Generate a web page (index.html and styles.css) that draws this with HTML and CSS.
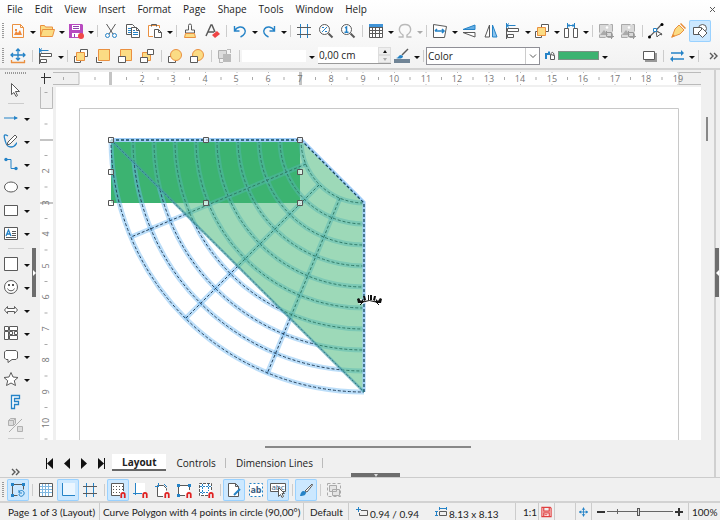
FILE: index.html
```html
<!DOCTYPE html>
<html lang="en">
<head>
<meta charset="utf-8">
<title>Drawing</title>
<link rel="stylesheet" href="styles.css">
</head>
<body>
<svg class="defs" aria-hidden="true">
  <symbol id="magnet" viewBox="0 0 5 6"><path d="M1 6V3a1.5 1.5 0 0 1 3 0V6" fill="none" stroke="#e02020" stroke-width="1.500"/></symbol>
  <symbol id="align" viewBox="0 0 16 16"><path class="b" d="M1.500 0v5M1.500 2.500h9M4 .5l-2.500 2 2.500 2"/><path class="k w" d="M2.500 5.500h11v3h-11zM2.500 11.500h6v3h-6z"/><path class="k" d="M1.500 5v11"/></symbol>
</svg>
<header class="top">
  <nav class="menu">
    <button>File</button><button>Edit</button><button>View</button><button>Insert</button><button>Format</button><button>Page</button><button>Shape</button><button>Tools</button><button>Window</button><button>Help</button>
    <button class="close" aria-label="Close document"><svg width="7" height="7" viewBox="0 0 7 7"><path class="k" d="M1 1l5 5M6 1L1 6"/></svg></button>
  </nav>
  <div class="bar">
    <span class="grip"></span>
    <button class="tool" aria-label="New"><svg viewBox="0 0 16 16"><path class="o" fill="#fff" d="M2.500 1.500h8l3 3v10h-11zM10.500 1.500v3h3"/><path d="M4 12l2-4 2 2 2-3 2 5zM5 6h2v2H5z" fill="#f08a3c"/></svg></button><button class="drop" aria-label="New options"></button>
    <button class="tool" aria-label="Open"><svg viewBox="0 0 16 16"><path class="o y" d="M1.500 13.500v-11h4l1 1.500h7v3M1.500 13.500l2-7h12l-2 7z"/></svg></button><button class="drop" aria-label="Recent files"></button>
    <button class="tool" aria-label="Save"><svg viewBox="0 0 16 16"><path fill="#b84bc0" d="M1 1h13l1 1v13H1z"/><path fill="#fff" d="M4 2h8v5H4zM4 10h8v4H4z"/><path stroke="#8e44ad" d="M5 3.500h6M5 5.500h6M6.500 11v3"/><circle cx="13" cy="13" r="3" fill="#f04848"/></svg></button><button class="drop" aria-label="Save options"></button>
    <i class="sep"></i>
    <button class="tool" aria-label="Cut"><svg viewBox="0 0 16 16"><path class="k" d="M3.500 1l6.500 10M12.500 1L6 11"/><circle class="b" cx="4.500" cy="12.500" r="2"/><circle class="b" cx="11.500" cy="12.500" r="2"/></svg></button>
    <button class="tool" aria-label="Copy"><svg viewBox="0 0 16 16"><path class="k w" d="M1.500 1.500h6l2 2v8h-8z"/><path class="b" d="M3 5.500h3M3 7.500h3M3 9.500h3"/><path class="k w" d="M6.500 4.500h5l3 3v7h-8zM11.500 4.500v3h3"/><path class="b" d="M8 9.500h5M8 11.500h5M8 7.500h2"/></svg></button>
    <button class="tool" aria-label="Paste"><svg viewBox="0 0 16 16"><path class="o w" d="M6 13.500H1.500v-11h11V5"/><path class="k" d="M4.500 3.500v-2h5v2"/><path class="k w" d="M7.500 6.500h4l3 3v5h-7zM11.500 6.500v3h3"/></svg></button><button class="drop" aria-label="Paste options"></button>
    <i class="sep"></i>
    <button class="tool" aria-label="Clone formatting"><svg viewBox="0 0 16 16"><path class="k" d="M6.500 7V2.500a1.500 1.500 0 0 1 3 0V7h3v3h-9V7z"/><path class="o y" d="M3.500 10.500h9l1 4h-11z"/></svg></button>
    <button class="tool" aria-label="Clear formatting"><svg viewBox="0 0 16 16"><path class="k" stroke-width="1.500" d="M2 13L7 2h1l3 7M4 9h6"/><path fill="#f04545" d="M8 12l5-4 3 3-5 4z"/></svg></button>
    <i class="sep"></i>
    <button class="tool" aria-label="Undo"><svg viewBox="0 0 16 16"><path class="b" stroke-width="1.400" d="M2.500 3v5h5M2.500 8c3-5 8-5 10-2s0 6-4 8"/></svg></button><button class="drop" aria-label="Undo history"></button>
    <button class="tool" aria-label="Redo"><svg viewBox="0 0 16 16"><path class="b" stroke-width="1.400" d="M13.500 3v5h-5M13.500 8c-3-5-8-5-10-2s0 6 4 8"/></svg></button><button class="drop" aria-label="Redo history"></button>
    <i class="sep"></i>
    <button class="tool" aria-label="Display grid"><svg viewBox="0 0 16 16"><path class="b" d="M4.500 1v14M11.500 1v14"/><path class="k" d="M1 4.500h14M1 11.500h14"/></svg></button>
    <button class="tool" aria-label="Zoom and pan"><svg viewBox="0 0 16 16"><circle class="k w" cx="6.500" cy="6.500" r="5"/><path class="k" stroke-width="2" d="M10.500 10.500l4 4"/><path class="b" d="M4 9l5-5M4 4.500h2M7 8.500h2"/></svg></button>
    <button class="tool" aria-label="Zoom 100%"><svg viewBox="0 0 16 16"><circle class="k w" cx="6.500" cy="6.500" r="5"/><path class="k" stroke-width="2" d="M10.500 10.500l4 4"/><path class="b" stroke-width="1.500" d="M5 5l1.500-1v5M4.500 9.200h4"/></svg></button>
    <i class="sep"></i>
    <button class="tool" aria-label="Table"><svg viewBox="0 0 16 16"><path class="k w" d="M1.500 1.500h13v13h-13z"/><path fill="#3f94d8" d="M1 1h14v3H1z"/><path class="k" d="M1 4.500h14M1 7.500h14M1 10.500h14M4.500 4v11M7.500 4v11M11.500 4v11"/></svg></button><button class="drop" aria-label="Table options"></button>
    <button class="tool" aria-label="Special character"><svg viewBox="0 0 16 16"><path fill="none" stroke="#b9b9b9" stroke-width="1.400" d="M1.500 14H6v-2C0 8 2 1.500 8 1.500S16 8 10 12v2h4.500"/></svg></button><button class="drop off" aria-label="Special character options"></button>
    <i class="sep"></i>
    <button class="tool" aria-label="Transformations"><svg viewBox="0 0 16 16"><path class="k w" d="M1.500 1.500l13 2-2 11h-11z"/><path class="b" stroke-width="1.600" d="M3 8h9M5 6L3 8M10 6l2 2-2 2"/></svg></button><button class="drop" aria-label="Transformation options"></button>
    <button class="tool" aria-label="Flip vertically"><svg viewBox="0 0 16 16"><path fill="#64aee4" stroke="#2583c7" d="M2 6.500L14 2v4.500z"/><path class="k w" d="M2 9.500h12V14z"/></svg></button>
    <button class="tool" aria-label="Flip horizontally"><svg viewBox="0 0 16 16"><path class="k w" d="M6.500 2v12H2z"/><path fill="#8bc4ee" stroke="#2583c7" d="M9.500 2v12H14z"/></svg></button>
    <button class="tool" aria-label="Align objects"><svg><use href="#align"/></svg></button><button class="drop" aria-label="Align options"></button>
    <button class="tool" aria-label="Arrange"><svg viewBox="0 0 16 16"><path class="k w" d="M7.500 1.500h7v7h-7zM1.500 8.500h6v6h-6z"/><path class="o y" d="M3.500 4.500h8v8h-8z"/></svg></button><button class="drop" aria-label="Arrange options"></button>
    <button class="tool" aria-label="Distribute"><svg viewBox="0 0 16 16"><path class="k w" d="M1.500 5.500h4v9h-4zM10.500 5.500h4v9h-4z"/><path class="b" d="M4.500 0v5M11.500 0v5M5 2.500h6M6.500 1L5 2.500 6.500 4M9.500 1L11 2.500 9.500 4"/></svg></button><button class="drop" aria-label="Distribute options"></button>
    <i class="sep"></i>
    <button class="tool" aria-label="Shadow"><svg viewBox="0 0 16 16"><path fill="#d9d9d9" stroke="#aaa" stroke-dasharray="9 2" d="M1.500 1.500h13v13h-13z"/><path fill="#aaa" d="M2 12l4-5 4 5z"/><circle cx="9" cy="4.500" r="1.300" fill="#fff"/><path fill="none" stroke="#999" d="M8.500 8v5.500H16M8 9.500h5.500V16"/></svg></button>
    <button class="tool" aria-label="Crop image"><svg viewBox="0 0 16 16"><path fill="#d9d9d9" stroke="#aaa" stroke-dasharray="9 2" d="M1.500 1.500h13v13h-13z"/><path fill="#aaa" d="M2 12l4-5 4 5z"/><circle cx="9" cy="4.500" r="1.300" fill="#fff"/><path fill="none" stroke="#999" d="M8.500 8v5.500H16M8 9.500h5.500V16"/></svg></button>
    <i class="sep"></i>
    <button class="tool" aria-label="Points"><svg viewBox="0 0 16 16"><path class="k" stroke-width="1.300" d="M1 14c4-3 8-8 13-13M6 6l8 6"/><path class="k w" d="M8 8l1 6 2-2 3-1z"/><path class="b w" d="M5.500 5.500h3v3h-3z"/><circle cx="14" cy="1.500" r="1.500"/><circle cx="1.500" cy="14" r="1.500"/></svg></button>
    <button class="tool" aria-label="Glue points"><svg viewBox="0 0 16 16"><path class="o y" d="M2 14l3-8 4-4 5 5-4 4z"/><path fill="#e88a32" d="M10 1l1-1 5 5-1 1zM1 15l2-4 2 2z"/></svg></button>
    <button class="tool on" aria-label="Show draw functions"><svg viewBox="0 0 16 16"><circle class="k w" cx="10.500" cy="5.500" r="4"/><path class="k w" d="M1.500 4.500h8v7h-8z"/><path class="k w" d="M10.500 5.500l4.500 4.500-4.500 4.500L6 10z"/></svg></button>
  </div>
  <div class="bar">
    <span class="grip"></span>
    <button class="tool" aria-label="Position and size"><svg viewBox="0 0 16 16"><path class="b" stroke-width="1.300" d="M8 1v11M1 7h14M6 3l2-2 2 2M6 10l2 2 2-2M3 5L1 7l2 2M13 5l2 2-2 2"/><path class="o" stroke-width="1.300" d="M1 14.500h14M1.500 12v3M14.500 12v3"/></svg></button>
    <i class="sep"></i>
    <button class="tool" aria-label="Align"><svg><use href="#align"/></svg></button><button class="drop" aria-label="Align choices"></button>
    <i class="sep"></i>
    <button class="tool" aria-label="Bring forward"><svg viewBox="0 0 16 16"><path class="k w" d="M7.500 1.500h7v7h-7zM1.500 8.500h6v6h-6z"/><path class="o y" d="M3.500 4.500h8v8h-8z"/></svg></button>
    <button class="tool" aria-label="Bring to front"><svg viewBox="0 0 16 16"><path class="k w" d="M10 1.500h4.500V7M1.500 9v5.500H7"/><path class="o y" d="M3.500 1.500h11v11h-11z"/></svg></button>
    <button class="tool" aria-label="Send to back"><svg viewBox="0 0 16 16"><path class="o y" d="M3.500 1.500h11v11h-11z"/><path class="k w" d="M1.500 8.500h7v6h-7z"/></svg></button>
    <button class="tool" aria-label="Send backward"><svg viewBox="0 0 16 16"><path class="o y" d="M3.500 4.500h8v8h-8z"/><path class="k w" d="M8.500 1.500h6v5h-6zM1.500 9.500h7v5h-7z"/></svg></button>
    <i class="sep"></i>
    <button class="tool" aria-label="In front of object"><svg viewBox="0 0 16 16"><path class="k w" d="M1.500 8.500h7v6h-7z"/><circle class="o y" cx="9" cy="7" r="5.500"/></svg></button>
    <button class="tool" aria-label="Behind object"><svg viewBox="0 0 16 16"><circle class="o y" cx="9" cy="7" r="5.500"/><path class="k w" d="M1.500 8.500h7v6h-7z"/></svg></button>
    <i class="sep"></i>
    <button class="tool" aria-label="Reverse"><svg viewBox="0 0 16 16"><path fill="#ddd" stroke="#b0b0b0" d="M1.500 2.500h8v8h-8z"/><path fill="#bbb" d="M6 6h8v8H6zM10 1h4v4h-1V2h-3zM2 11v4h4v-1H3v-3z"/></svg></button>
    <i class="sep"></i>
    <button class="linestyle" aria-label="Line style"></button><button class="drop wide" aria-label="Line styles"></button>
    <div class="spin"><input type="text" value="0,00 cm" aria-label="Line width"><div class="steps"><button class="up" aria-label="Increase"></button><button class="down" aria-label="Decrease"></button></div></div>
    <button class="tool" aria-label="Line color"><svg viewBox="0 0 16 16"><path fill="#2583c7" d="M2 10c3 0 2-3 5-3l2 1c0 3-4 3-7 2z"/><path class="k" stroke-width="1.500" d="M8 7l6-6"/><path fill="#708496" d="M0 11h16v4H0z"/></svg></button><button class="drop" aria-label="Line colors"></button>
    <i class="sep"></i>
    <label class="fill"><select aria-label="Area style"><option>Color</option></select><svg width="8" height="5" viewBox="0 0 8 5"><path class="k" d="M1 .5l3 3 3-3"/></svg></label>
    <button class="swatch" aria-label="Fill color"><svg width="12" height="12" viewBox="0 0 12 12"><path fill="#2583c7" d="M0 9V3h3V1.500h2V5H2v4z"/><path class="k w" d="M5.500 4.500l4 1v4h-4zM6 4.500c0-3 3-3 3 1"/></svg><i></i></button><button class="drop wide" aria-label="Fill colors"></button>
    <button class="tool push" aria-label="Shadow toggle"><svg viewBox="0 0 16 16"><path fill="#999" d="M4 5h12v9H4z"/><path class="k w" d="M2.500 3.500h11v8h-11z"/></svg></button>
    <i class="sep"></i>
    <button class="tool" aria-label="Arrow style"><svg viewBox="0 0 16 16"><path class="b" stroke-width="1.300" d="M2 5h11M3 11h12"/><path fill="#2583c7" d="M12 2l3 3-3 3zM4 8l-3 3 3 3z"/></svg></button><button class="drop" aria-label="Arrow styles"></button>
    <i class="sep"></i>
    <button class="more" aria-label="More controls"><svg width="9" height="8" viewBox="0 0 9 8"><path class="k" stroke-width="1.400" d="M1 1l3 3-3 3M5 1l3 3-3 3"/></svg></button>
  </div>
</header>
<main class="work">
  <aside class="tools">
    <span class="hgrip"></span>
    <div class="row solo"><button class="tool" aria-label="Select"><svg viewBox="0 0 16 16"><path class="k w" d="M4.500 1.500v11l2.500-2 2 4 1.500-1-2-4h4z"/></svg></button></div>
    <i class="hsep"></i>
    <div class="row"><button class="tool" aria-label="Line"><svg viewBox="0 0 16 16"><path class="b" d="M1 8h13"/><path fill="#2583c7" d="M11 6l4 2-4 2z"/></svg></button><button class="drop" aria-label="Lines"></button></div>
    <div class="row"><button class="tool" aria-label="Curve"><svg viewBox="0 0 16 16"><path class="b" stroke-width="1.300" d="M5 3C0 0 1 4 2 7s1 7 6 7 5-4 6-4"/><path class="k w" d="M4 12l1-3 7-7 2 2-7 7z"/></svg></button><button class="drop" aria-label="Curves"></button></div>
    <div class="row"><button class="tool" aria-label="Connector"><svg viewBox="0 0 16 16"><path class="b" d="M2 3.500h6v9h5"/><circle cx="3" cy="3.500" r="1.700" fill="#2583c7"/><circle cx="13" cy="12.500" r="1.700" fill="#2583c7"/></svg></button><button class="drop" aria-label="Connectors"></button></div>
    <div class="row"><button class="tool" aria-label="Ellipse"><svg viewBox="0 0 16 16"><ellipse class="k w" cx="8" cy="8" rx="6.500" ry="5"/></svg></button><button class="drop" aria-label="Ellipses"></button></div>
    <div class="row"><button class="tool" aria-label="Rectangle"><svg viewBox="0 0 16 16"><path class="k w" d="M1.500 3.500h13v10h-13z"/></svg></button><button class="drop" aria-label="Rectangles"></button></div>
    <div class="row"><button class="tool" aria-label="Text box"><svg viewBox="0 0 16 16"><path class="k w" d="M1.500 2.500h13v12h-13z"/><path class="b" stroke-width="1.300" d="M3 11l2.500-6L8 11M4 9h3"/><path class="k" d="M9 6.500h4M9 8.500h4M9 10.500h4M3 12.500h10"/></svg></button><button class="drop" aria-label="Text boxes"></button></div>
    <i class="hsep tall"></i>
    <div class="row"><button class="tool" aria-label="Basic shapes"><svg viewBox="0 0 16 16"><path class="k w" d="M1.500 1.500h13v13h-13z"/></svg></button><button class="drop" aria-label="More basic shapes"></button></div>
    <div class="row"><button class="tool" aria-label="Symbol shapes"><svg viewBox="0 0 16 16"><circle class="k w" cx="8" cy="8" r="6.500"/><path class="k" d="M4.500 9.500c1 3 6 3 7 0"/><path fill="#555" d="M5 5h2v2H5zM9 5h2v2H9z"/></svg></button><button class="drop" aria-label="More symbols"></button></div>
    <div class="row"><button class="tool" aria-label="Block arrows"><svg viewBox="0 0 16 16"><path class="k w" d="M1.500 8l3-3.500v2h7v-2l3 3.500-3 3.500v-2h-7v2z"/></svg></button><button class="drop" aria-label="More arrows"></button></div>
    <div class="row"><button class="tool" aria-label="Flowchart"><svg viewBox="0 0 16 16"><path class="k w" d="M1.500 1.500h4v4h-4zM6.500 1.500h8v4h-8zM1.500 6.500h4v8h-4zM6.500 6.500h3v3h-3zM11.500 6.500h3v3h-3zM6.500 10.500h8v4h-8z"/></svg></button><button class="drop" aria-label="More flowchart"></button></div>
    <div class="row"><button class="tool" aria-label="Callout"><svg viewBox="0 0 16 16"><path class="k w" d="M3 2.500h10l1.500 1.500v6L13 11.500H9l-4 3v-3H3L1.500 10V4z"/></svg></button><button class="drop" aria-label="More callouts"></button></div>
    <div class="row"><button class="tool" aria-label="Stars"><svg viewBox="0 0 16 16"><path class="k w" d="M8 1.500l2 4.500 5 .5-3.700 3.200 1.200 4.800L8 12l-4.500 2.500 1.200-4.800L1 6.500 6 6z"/></svg></button><button class="drop" aria-label="More stars"></button></div>
    <div class="row solo"><button class="tool" aria-label="Fontwork"><svg viewBox="0 0 16 16"><path class="b w" stroke-width="1.300" d="M4.500 1.500h8v3h-5v3h4v3h-4v4h-3z"/></svg></button></div>
    <div class="row solo"><button class="tool" aria-label="Toggle extrusion"><svg viewBox="0 0 16 16"><path fill="#ddd" stroke="#b0b0b0" d="M1.500 3.500l2-2h5v5l-2 2h-5zM1.500 3.500h5v5M6.500 3.500l2-2M2 15L15 2M10.500 9.500h5v5h-5z"/></svg></button></div>
    <i class="hsep"></i>
    <button class="more last" aria-label="More tools"><svg width="9" height="8" viewBox="0 0 9 8"><path class="k" stroke-width="1.400" d="M1 1l3 3-3 3M5 1l3 3-3 3"/></svg></button>
    <button class="edge left" aria-label="Hide toolbar"></button>
  </aside>
  <section class="doc">
    <div class="view">
      <svg class="corner" viewBox="0 0 13 17"><path d="M1 7.500h10M4.500 3v11" stroke="#333" fill="none"/></svg>
      <svg class="hruler" viewBox="53 70 648 17" preserveAspectRatio="xMinYMin slice">
        <path fill="#fff" d="M79 72h622v13H79z"/><path fill="#f0f0f0" stroke="#bbb" d="M52 72.500h27v12H52zM679 72.500h30v12h-30z"/>
        <path fill="#c4c4c4" d="M109 72h3v13h-3zM299 72h3v13h-3z"/>
        <path stroke="#aaa" stroke-dasharray="1 30.500" stroke-width="3" d="M63 78.500h600"/>
        <path stroke="#bbb" stroke-dasharray="1 30.500" d="M142 72.500h540M142 84.500h540"/>
        <g class="num"><text x="142" y="82">2</text><text x="173" y="82">3</text><text x="205" y="82">4</text><text x="236" y="82">5</text><text x="268" y="82">6</text><text x="300" y="82">7</text><text x="331" y="82">8</text><text x="363" y="82">9</text><text x="394" y="82">10</text><text x="426" y="82">11</text><text x="457" y="82">12</text><text x="489" y="82">13</text><text x="520" y="82">14</text><text x="552" y="82">15</text><text x="583" y="82">16</text><text x="615" y="82">17</text><text x="646" y="82">18</text><text x="678" y="82">19</text></g>
      </svg>
      <svg class="vruler" viewBox="40 87 16 353">
        <path fill="#fff" d="M40 108h13v332H40z"/><path fill="#f0f0f0" stroke="#bbb" d="M40.500 80v28.500h12V80z"/>
        <path fill="#c4c4c4" d="M40 139h13v2H40zM40 202h13v2H40z"/>
        <path stroke="#aaa" stroke-dasharray="1 30.500" stroke-width="3" d="M46 92v348"/>
        <g class="num"><text transform="translate(49 171) rotate(-90)">2</text><text transform="translate(49 203) rotate(-90)">3</text><text transform="translate(49 234) rotate(-90)">4</text><text transform="translate(49 266) rotate(-90)">5</text><text transform="translate(49 297) rotate(-90)">6</text><text transform="translate(49 329) rotate(-90)">7</text><text transform="translate(49 360) rotate(-90)">8</text><text transform="translate(49 392) rotate(-90)">9</text><text transform="translate(49 423) rotate(-90)">10</text></g>
      </svg>
      <svg class="canvas" viewBox="56 87 645 353" preserveAspectRatio="xMinYMin slice" role="img" aria-label="Curved polygon drawing">
        <defs>
          <g id="mesh"><path d="M301 140A63 63 0 0 0 364 203M280 140A84 84 0 0 0 364 224M259 140A105 105 0 0 0 364 245M238 140A126 126 0 0 0 364 266M217 140A147 147 0 0 0 364 287M196 140A168 168 0 0 0 364 308M175 140A189 189 0 0 0 364 329M154 140A210 210 0 0 0 364 350M133 140A231 231 0 0 0 364 371M111 140A253 253 0 0 0 364 392"/><path d="M306 164L131 237M319 185L185 319M340 198L267 374"/></g>
          <path id="outline" d="M111 140H301L364 203V392Z"/>
        </defs>
        <path fill="#fff" d="M56 87h900v900H56z"/>
        <path fill="none" stroke="#c8c8c8" d="M79.500 450V108.500h599V450"/>
        <path fill="#3cb371" d="M111 140h189v63H111z"/>
        <g fill="none">
          <use href="#mesh" stroke="#6cb6f2" stroke-opacity=".46" stroke-width="5"/>
          <use href="#mesh" stroke="#24405a" stroke-dasharray="3 2" stroke-width="1"/>
        </g>
        <use href="#outline" fill="#3cb371" fill-opacity=".5"/>
        <path fill="none" stroke="#a0cdf8" stroke-width="4" d="M111 140H301"/>
        <path fill="none" stroke="#a0cdf8" stroke-width="3" d="M301 139L364 202V392"/>
        <path fill="none" stroke="#4b9eae" stroke-opacity=".7" stroke-width="2.500" d="M111 140L364 392"/>
        <path fill="none" stroke="#164b58" stroke-dasharray="3 2" stroke-width="1.300" d="M111 140H301L364 203V392"/>
        <path fill="none" stroke="#2e777c" stroke-dasharray="2 2" d="M111 140L364 392"/>
        <g fill="#fff" fill-opacity=".65" stroke="#555"><path d="M108.500 137.500h5v5h-5zM203.500 137.500h5v5h-5zM297.500 137.500h5v5h-5zM108.500 169.500h5v5h-5zM297.500 169.500h5v5h-5zM108.500 200.500h5v5h-5zM203.500 200.500h5v5h-5zM297.500 200.500h5v5h-5z"/></g>
        <path d="M361 303q8-5 17 0M360 299v3h4M379 299v3h-4" fill="none" stroke="#fff" stroke-width="3"/>
        <path d="M363 302q6-3 13 0M360 305l4-4M379 305l-4-4" fill="none" stroke="#111"/>
        <path d="M357 299l2-1 2 3 2-2v4h-5zM363 296h2l1 4-2 1zM368 295h1v5h-1zM370 295h2v5h-2zM374 296h2l-1 5-2-1zM382 299l-2-1-2 3-2-2v4h5z" fill="#111"/>
      </svg>
      <div class="vscroll"><i></i></div>
    </div>
    <div class="hscroll"><i></i></div>
    <div class="tabs">
      <button class="nav" aria-label="First page"><svg viewBox="0 0 8 11"><path d="M0 0h1v11H0zM7 0v11L1 5.500z"/></svg></button>
      <button class="nav" aria-label="Previous page"><svg viewBox="0 0 8 11"><path d="M7 0v11L1 5.500z"/></svg></button>
      <button class="nav" aria-label="Next page"><svg viewBox="0 0 8 11"><path d="M1 0v11l6-5.500z"/></svg></button>
      <button class="nav" aria-label="Last page"><svg viewBox="0 0 8 11"><path d="M7 0h1v11H7zM1 0v11l6-5.500z"/></svg></button>
      <button class="tab active">Layout</button><button class="tab">Controls</button><button class="tab">Dimension Lines</button>
    </div>
    <button class="edge bottom" aria-label="Hide panel"></button>
  </section>
  <div class="side"><button class="edge right" aria-label="Show sidebar"></button></div>
</main>
<div class="bar options">
  <span class="grip"></span>
  <button class="tool on" aria-label="Rotation mode"><svg viewBox="0 0 16 16"><path class="k" d="M2.500 2.500h11v5M2.500 2.500v11h5"/><path class="b" d="M9 10c2-3 6-1 5 2s-5 3-5 0M9 8v3h3"/><path fill="#2583c7" d="M1 1h3v3H1zM12 1h3v3h-3zM1 12h3v3H1z"/></svg></button>
  <i class="sep"></i>
  <button class="tool" aria-label="Show grid"><svg viewBox="0 0 16 16"><path class="k w" d="M1.500 1.500h13v13h-13z"/><path stroke="#7fb7e0" d="M4.500 2v12M7.500 2v12M10.500 2v12M2 4.500h12M2 7.500h12M2 10.500h12" fill="none"/></svg></button>
  <button class="tool on" aria-label="Helplines"><svg viewBox="0 0 16 16"><path fill="#fff" fill-opacity=".6" d="M2 1h13v12H2z"/><path class="b" d="M2.500 1v12.500H15"/></svg></button>
  <button class="tool" aria-label="Grid to front"><svg viewBox="0 0 16 16"><path class="b" d="M4.500 1v14M11.500 1v14"/><path class="k" d="M1 4.500h14M1 11.500h14"/></svg></button>
  <i class="sep"></i>
  <button class="tool on" aria-label="Snap to grid"><svg viewBox="0 0 16 16"><path class="k w" d="M10 13.500H1.500v-12h12V9"/><path stroke="#555" stroke-dasharray="1 2" d="M3 4.500h10M3 7.500h10M3 10.500h7" fill="none"/><use href="#magnet" x="10" y="9" width="6" height="7"/></svg></button>
  <button class="tool" aria-label="Snap to lines"><svg viewBox="0 0 16 16"><path fill="#fff" d="M3 1h10v10H3z"/><path class="b" d="M3.500 1v12M1 11.500h9"/><use href="#magnet" x="10" y="9" width="6" height="7"/></svg></button>
  <button class="tool" aria-label="Snap to page"><svg viewBox="0 0 16 16"><path class="k w" d="M9 14.500H3.500v-11h6l3 3v2"/><path class="b" d="M1 4.500h4M4.500 1v3M10 2l3 3"/><use href="#magnet" x="10" y="9" width="6" height="7"/></svg></button>
  <button class="tool" aria-label="Snap to border"><svg viewBox="0 0 16 16"><path class="k w" d="M9 13.500H2.500v-10h11V8"/><path fill="#2583c7" d="M1 2h3v3H1zM12 2h3v3h-3zM1 12h3v3H1z"/><use href="#magnet" x="10" y="9" width="6" height="7"/></svg></button>
  <button class="tool" aria-label="Snap to points"><svg viewBox="0 0 16 16"><path class="k w" stroke-dasharray="3 1" d="M10 13.500H1.500v-12h12V9"/><path class="b" d="M4.500 2v10M10.500 2v7M2 4.500h11M2 10.500h8" stroke-dasharray="2 1"/><use href="#magnet" x="10" y="9" width="6" height="7"/></svg></button>
  <i class="sep"></i>
  <button class="tool on" aria-label="Quick edit"><svg viewBox="0 0 16 16"><path class="k w" d="M2.500 1.500h7l3 3v10h-10zM9.500 1.500v3h3"/><path stroke="#2583c7" stroke-width="2" d="M8 13l6-6"/></svg></button>
  <button class="tool" aria-label="Select text area"><svg viewBox="0 0 16 16"><path class="b w" stroke-dasharray="2 2" d="M1.500 1.500h13v13h-13z"/><text x="8" y="11" class="glyph">ab</text></svg></button>
  <button class="tool on" aria-label="Double-click text"><svg viewBox="0 0 16 16"><path class="k w" d="M.5 1.500h15v8H.5z"/><text x="8" y="8" class="glyph thin">abc</text><path class="k w" d="M8.500 5.500v9l2-2 1.500 3 1.500-1-1.500-3h2.500z"/></svg></button>
  <i class="sep"></i>
  <button class="tool on" aria-label="Modify with attributes"><svg viewBox="0 0 16 16"><path fill="#2583c7" d="M2 14c1-5 3-6 6-4 0 3-2 4-6 4z"/><path class="k w" d="M7 9l7-7 .500 1L9 10z"/></svg></button>
  <i class="sep"></i>
  <button class="tool" aria-label="Exit groups"><svg viewBox="0 0 16 16"><path fill="#e4e4e4" stroke="#aaa" d="M3.500 3.500h7v6h-7zM6.500 7.500h7v6h-7z"/><path stroke="#aaa" stroke-dasharray="3 2" fill="none" d="M1.500 1.500h13v13h-13z"/></svg></button>
</div>
<footer class="status">
  <span class="s-page">Page 1 of 3 (Layout)</span>
  <span class="s-shape">Curve Polygon with 4 points in circle (90,00°)</span>
  <span class="s-style">Default</span>
  <span class="s-pos"><svg width="12" height="10" viewBox="0 0 12 10"><path class="k" d="M5 3.500h6.500v5h-8V6"/><path class="b" d="M0 2.500h5M2.500 0v5"/></svg><b>0.94 / 0.94</b></span>
  <span class="s-size"><svg width="12" height="10" viewBox="0 0 12 10"><path class="k" d="M4.500 4.500h7v4h-7z"/><path class="b" d="M4 1.500h8M1.500 4v5M0 4.500h3M0 8.500h3M4.500 0v3M11.500 0v3"/></svg><b>8.13 x 8.13</b></span>
  <span class="s-scale">1:1</span>
  <span class="s-save"><svg width="12" height="12" viewBox="0 0 12 12"><path fill="#fff" stroke="#e04040" stroke-width="1.300" d="M1 1h9l1 1v9H1zM3 1v4h6V1M3 11V7h6v4M4 9h3"/></svg></span>
  <span class="s-sign"></span>
  <span class="s-fit"><svg width="10" height="10" viewBox="0 0 10 10"><path class="b" d="M5 0v10M0 5h10"/><path fill="#2583c7" d="M5 0l2 2.500H3zM5 10L3 7.500h4zM0 5l2.500-2v4zM10 5L7.500 3v4z"/></svg></span>
  <span class="s-zoom"><button aria-label="Zoom out"><svg width="8" height="8" viewBox="0 0 8 8"><path stroke="#333" stroke-width="2" d="M0 4h8"/></svg></button><input type="range" min="0" max="100" value="47" aria-label="Zoom"><button aria-label="Zoom in"><svg width="8" height="8" viewBox="0 0 8 8"><path stroke="#333" stroke-width="2" d="M0 4h8M4 0v8"/></svg></button></span>
  <span class="s-pct">100%</span>
</footer>
</body>
</html>
```
FILE: styles.css
```css
* { box-sizing: border-box; }
html, body { height: 100%; }
body {
  margin: 0;
  display: flex;
  flex-direction: column;
  overflow: hidden;
  background: #f0f0f0;
  color: #222;
  font: 10px/16px "Open Sans", "Noto Sans", sans-serif;
}
button {
  margin: 0;
  padding: 0;
  border: 0;
  background: none;
  color: inherit;
  font: inherit;
}
svg { display: block; }
.defs { position: absolute; width: 0; height: 0; }
.k { fill: none; stroke: #5a5a5a; }
.b { fill: none; stroke: #2583c7; }
.o { fill: none; stroke: #ea9040; }
.w { fill: #fff; }
.y { fill: #fbdc84; }

.top {
  background: linear-gradient(#fff, #f2f2f2);
  border-bottom: 2px solid #d2d2d2;
}
.menu {
  display: flex;
  gap: 12px;
  height: 18px;
  padding: 0 4px 0 7px;
}
.menu .close { margin-left: auto; }

.bar {
  display: flex;
  align-items: center;
  height: 25px;
}
.grip {
  width: 2px;
  height: 16px;
  margin: 0 3px 0 2px;
  background: repeating-linear-gradient(#999 0 1px, transparent 1px 2px);
}
.tool {
  flex: none;
  width: 22px;
  height: 22px;
  display: grid;
  place-items: center;
  border-radius: 2px;
}
.tool svg { width: 16px; height: 16px; }
.on { background: #cce8ff; box-shadow: inset 0 0 0 1px #99d1ff; }
.drop {
  flex: none;
  width: 7px;
  height: 22px;
  display: grid;
  place-items: center;
}
.drop::after {
  content: "";
  margin-top: 4px;
  border: solid transparent;
  border-width: 3px 3px 0;
  border-top-color: #111;
}
.drop.off::after { border-top-color: #aaa; }
.drop.wide { width: 12px; }
.sep {
  flex: none;
  width: 1px;
  height: 12px;
  margin: 0 2px 0 3px;
  background: #ccc;
}
.linestyle { width: 64px; height: 12px; background: #fff; }
.spin {
  display: flex;
  width: 73px;
  height: 17px;
  border-bottom: 1px solid #999;
  background: #fff;
}
.spin input {
  min-width: 0;
  flex: 1;
  padding: 0 1px;
  border: 0;
  background: none;
  color: inherit;
  font: inherit;
}
.steps { display: grid; width: 13px; }
.steps button { display: grid; place-items: center; background: #eee; border: 1px solid #ddd; }
.steps button::after { content: ""; border: solid transparent; }
.steps .up::after { border-width: 0 2px 3px; border-bottom-color: #111; }
.steps .down::after { border-width: 3px 2px 0; border-top-color: #aaa; }
.fill { position: relative; width: 114px; }
.fill select {
  appearance: none;
  display: block;
  width: 100%;
  height: 18px;
  padding: 0 1px;
  border: 1px solid #8f8f96;
  border-radius: 0;
  background: linear-gradient(#ccc, #ccc) right 13px top / 1px 100% no-repeat #fff;
  color: inherit;
  font: inherit;
}
.fill svg { position: absolute; right: 3px; top: 7px; }
.swatch { display: flex; align-items: center; gap: 1px; padding-left: 5px; }
.swatch i { width: 41px; height: 9px; border: 1px solid #7d9186; background: #3cb371; }
.push { margin-left: auto; }
.more { padding: 0 2px 0 8px; }

.work { flex: 1; min-height: 0; display: flex; }
.tools {
  position: relative;
  width: 40px;
  display: flex;
  flex-direction: column;
}
.hgrip {
  width: 22px;
  height: 2px;
  margin: 2px 0 4px 5px;
  background: repeating-linear-gradient(90deg, #999 0 1px, transparent 1px 2px);
}
.row { display: flex; align-items: center; height: 23px; }
.row .drop { margin-left: 1px; }
.solo { padding-left: 4px; }
.hsep { width: 16px; height: 1px; margin: 2px 0 2px 8px; background: #ccc; }
.tall { margin: 4px 0 3px 8px; }
.last { margin: auto auto 1px 3px; }
.edge { position: absolute; background: #6d6d6d; display: grid; place-items: center; }
.edge::after { content: ""; border: solid transparent; }
.left { right: 4px; top: 178px; width: 4px; height: 49px; }
.left::after { border-width: 3px 0 3px 3px; border-left-color: #fff; }
.right { right: 1px; top: 178px; width: 4px; height: 49px; }
.right::after { border-width: 3px 3px 3px 0; border-right-color: #fff; }
.bottom { left: 50%; bottom: 0; width: 49px; height: 4px; margin-left: -26px; }
.bottom::after { border-width: 3px 2px 0; border-top-color: #ddd; }

.doc { position: relative; flex: 1; min-width: 0; display: flex; flex-direction: column; }
.view {
  flex: 1;
  min-height: 0;
  display: grid;
  grid-template: 17px minmax(0, 1fr) / 13px 3px minmax(0, 1fr) 13px;
}
.corner { width: 13px; height: 17px; }
.hruler { grid-area: 1 / 2 / 2 / 4; width: 100%; height: 17px; }
.vruler { grid-area: 2 / 1 / 3 / 3; width: 16px; height: 353px; }
.canvas { grid-area: 2 / 3; width: 100%; height: 100%; }
.num { font: 9px "Open Sans", sans-serif; fill: #777; text-anchor: middle; }
.vscroll { grid-area: 1 / 4 / 3 / 5; padding: 47px 5px 0; }
.vscroll i { display: block; width: 2px; height: 24px; background: #888; }
.hscroll { height: 14px; padding: 6px 0 0 225px; }
.hscroll i { display: block; width: 206px; height: 2px; background: #888; }
.tabs { display: flex; height: 23px; padding-left: 1px; }
.nav { width: 17px; height: 18px; display: grid; place-items: center; }
.nav svg { width: 8px; height: 11px; fill: #111; }
.tab { height: 18px; padding: 0 10px; position: relative; }
.tab + .tab::after {
  content: "";
  position: absolute;
  right: 0;
  top: 4px;
  height: 10px;
  border-right: 1px solid #bbb;
}
.tab.active::after { display: none; }
.active {
  height: 17px;
  margin-left: 3px;
  background: #fff;
  border-bottom: 2px solid #666;
  font-weight: 700;
}
.side { position: relative; width: 6px; border-left: 2px solid #d0d0d0; }

.options { height: 26px; border-top: 1px solid #ccc; border-bottom: 2px solid #d2d2d2; }
.glyph { font: 700 9px "Open Sans", sans-serif; fill: #3a5c80; text-anchor: middle; }
.thin { font-size: 8px; font-weight: 400; }
.status { display: flex; height: 17px; white-space: nowrap; font-family: Lato, sans-serif; }
.status > span { display: flex; align-items: center; padding: 0 4px; }
.status > span + span { border-left: 1px solid #ccc; }
.status b { font-weight: 400; padding-top: 4px; }
.status .s-page { width: 99px; padding-left: 8px; }
.status .s-shape { width: 204px; padding: 0 3px; }
.status .s-style { width: 45px; padding-left: 6px; }
.status .s-pos { width: 83px; gap: 2px; padding-left: 7px; }
.status .s-size { flex: 1; gap: 2px; border: 0; }
.status .s-scale { width: 23px; padding-left: 7px; }
.status .s-save { width: 16px; padding: 0 2px; }
.status .s-sign { width: 21px; }
.status .s-fit { width: 16px; padding: 0 3px; }
.status .s-zoom { width: 97px; gap: 2px; padding: 0 5px; }
.status .s-pct { width: 32px; padding: 0 3px; }
.s-zoom input {
  appearance: none;
  flex: 1;
  min-width: 0;
  height: 12px;
  margin: 0;
  background:
    linear-gradient(#666, #666) 10px center / 1px 5px no-repeat,
    linear-gradient(#666, #666) center / 100% 1px no-repeat;
}
.s-zoom input::-webkit-slider-thumb {
  appearance: none;
  width: 3px;
  height: 8px;
  border: 1px solid #555;
  background: #ddd;
}
```
